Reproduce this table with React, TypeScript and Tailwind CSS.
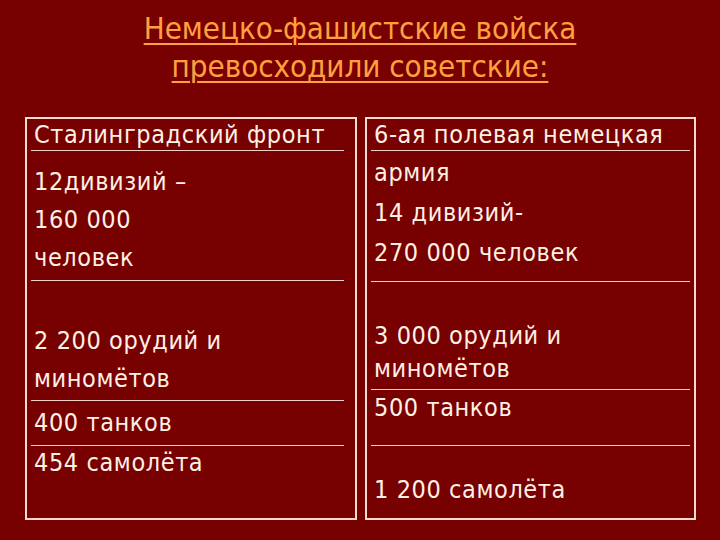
const font = { fontFamily: '"DejaVu Sans Condensed", "DejaVu Sans", sans-serif' };

function Row({ className, lines }: { className: string; lines: string[] }) {
  return (
    <div className={className}>
      {lines.map((l) => (
        <div key={l}>{l}</div>
      ))}
    </div>
  );
}

export default function App() {
  return (
    <div className="flex h-[540px] w-[720px] flex-col bg-[#770000] text-[#fff0e4]" style={font}>
      <h1 className="pt-[9px] text-center text-[31px] leading-[38px] text-[#ffa040] underline decoration-2 underline-offset-[4px]">
        Немецко-фашистские войска
        <br />
        превосходили советские:
      </h1>

      <div className="mt-[32px] flex gap-[8px] pl-[25px] text-[25px] tracking-[0.6px]">
        <div className="flex h-[403px] w-[332px] flex-col border-2 border-[#f4dcd0] pl-[4px] pr-[11px]">
          <Row className="flex h-[32px] items-end border-b border-[#f0d0c8] pl-[3px] leading-[30px]" lines={['Сталинградский фронт']} />
          <Row className="h-[130px] border-b border-[#f0d0c8] pl-[3px] pt-[12px] leading-[38px]" lines={['12дивизий –', '160 000', 'человек']} />
          <Row className="flex h-[120px] flex-col justify-end border-b border-[#f0d0c8] pl-[3px] pb-[2px] leading-[38px]" lines={['2 200 орудий и', 'миномётов']} />
          <Row className="flex h-[45px] items-center border-b border-[#f0d0c8] pl-[3px] leading-[38px]" lines={['400 танков']} />
          <Row className="pl-[3px] leading-[34px]" lines={['454 самолёта']} />
        </div>

        <div className="flex h-[403px] w-[331px] flex-col border-2 border-[#f4dcd0] pl-[4px] pr-[4px]">
          <Row className="flex h-[32px] items-end border-b border-[#f0d0c8] pl-[3px] leading-[30px]" lines={['6-ая полевая немецкая']} />
          <Row className="h-[131px] border-b border-[#f0d0c8] pl-[3px] pt-[2px] leading-[40px]" lines={['армия', '14 дивизий-', '270 000 человек']} />
          <Row className="flex h-[108px] flex-col justify-end border-b border-[#f0d0c8] pl-[3px] pb-[4px] leading-[33px]" lines={['3 000 орудий и', 'миномётов']} />
          <Row className="h-[56px] border-b border-[#f0d0c8] pl-[3px] leading-[36px]" lines={['500 танков']} />
          <Row className="pl-[3px] pt-[26px] leading-[36px]" lines={['1 200 самолёта']} />
        </div>
      </div>
    </div>
  );
}
